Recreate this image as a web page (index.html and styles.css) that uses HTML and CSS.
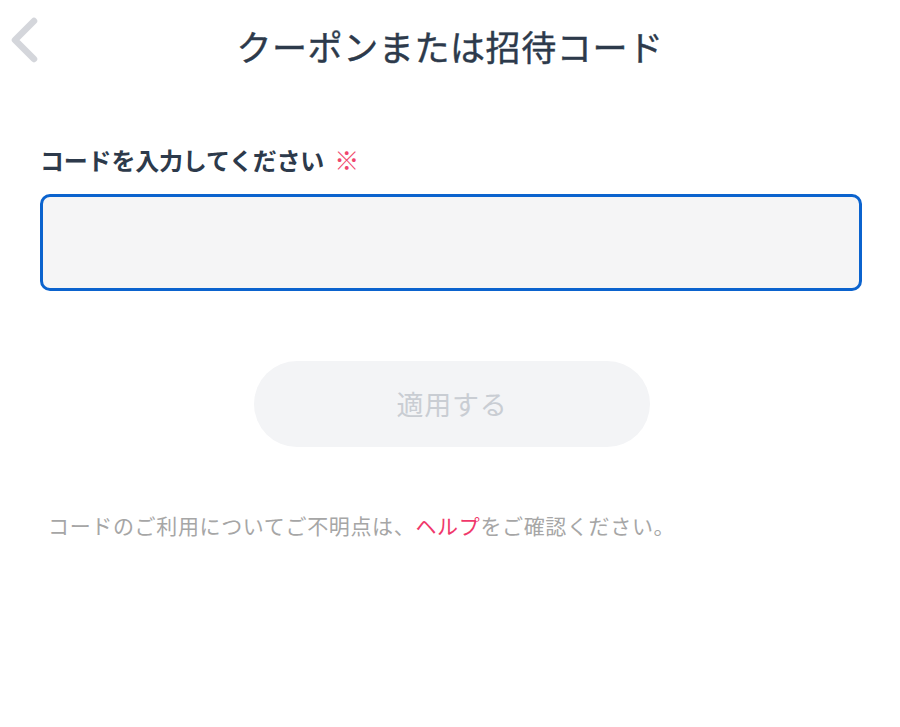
FILE: index.html
```html
<!DOCTYPE html>
<html lang="ja">
<head>
<meta charset="utf-8">
<title>クーポンまたは招待コード</title>
<link rel="stylesheet" href="styles.css">
</head>
<body>
<header class="header">
  <div class="back">
    <svg width="34" height="48" viewBox="0 0 34 48" aria-hidden="true">
      <polyline points="25,5 6,24 25,43" fill="none" stroke="#d4d6db" stroke-width="6.5" stroke-linecap="round" stroke-linejoin="round"/>
    </svg>
  </div>
  <h1 class="title">クーポンまたは招待コード</h1>
  <div></div>
</header>
<main class="main">
  <label class="label" for="code">コードを入力してください<span class="req">※</span></label>
  <input class="input" id="code" type="text">
  <div class="btn-row">
    <button class="apply" type="button">適用する</button>
  </div>
  <p class="note">コードのご利用についてご不明点は、<span class="help">ヘルプ</span>をご確認ください。</p>
</main>
</body>
</html>
```
FILE: styles.css
```css
html, body {
  margin: 0;
  padding: 0;
  background: #ffffff;
}
body {
  font-family: "Noto Sans CJK JP", "Noto Sans", sans-serif;
  color: #2d3a4b;
}
.header {
  height: 90px;
  display: grid;
  grid-template-columns: 1fr auto 1fr;
  align-items: center;
}
.back {
  padding-left: 9px;
  display: flex;
  align-items: center;
  height: 48px;
  margin-top: -10px;
}
.title {
  margin: 0;
  font-size: 35px;
  line-height: 1;
  font-weight: 400;
  color: #2d3a4b;
  letter-spacing: 0.6px;
  -webkit-text-stroke: 0.4px #2d3a4b;
}
.main {
  padding: 0 38px 0 40px;
  display: flex;
  flex-direction: column;
}
.label {
  margin-top: 54px;
  font-size: 24px;
  line-height: 1.2;
  font-weight: 700;
  color: #2d3a4b;
  letter-spacing: -0.2px;
}
.req {
  color: #f0466e;
  font-weight: 400;
  font-size: 25px;
  margin-left: 10px;
}
.input {
  margin-top: 19px;
  box-sizing: border-box;
  height: 97px;
  width: 100%;
  border: 3px solid #0b63ce;
  border-radius: 10px;
  background: #f5f5f6;
  outline: none;
  font-size: 24px;
  padding: 0 20px;
}
.btn-row {
  display: flex;
  justify-content: center;
  margin-top: 70px;
  padding-left: 2px;
}
.apply {
  width: 396px;
  height: 86px;
  border: none;
  border-radius: 43px;
  background: #f3f4f6;
  color: #c9cdd3;
  font-family: inherit;
  font-size: 27px;
  font-weight: 400;
  letter-spacing: 0.8px;
}
.note {
  margin: 64px 0 0 8px;
  font-size: 21px;
  line-height: 1.4;
  color: #a6a6a6;
  letter-spacing: 0.65px;
}
.help {
  color: #f0386b;
}
```
